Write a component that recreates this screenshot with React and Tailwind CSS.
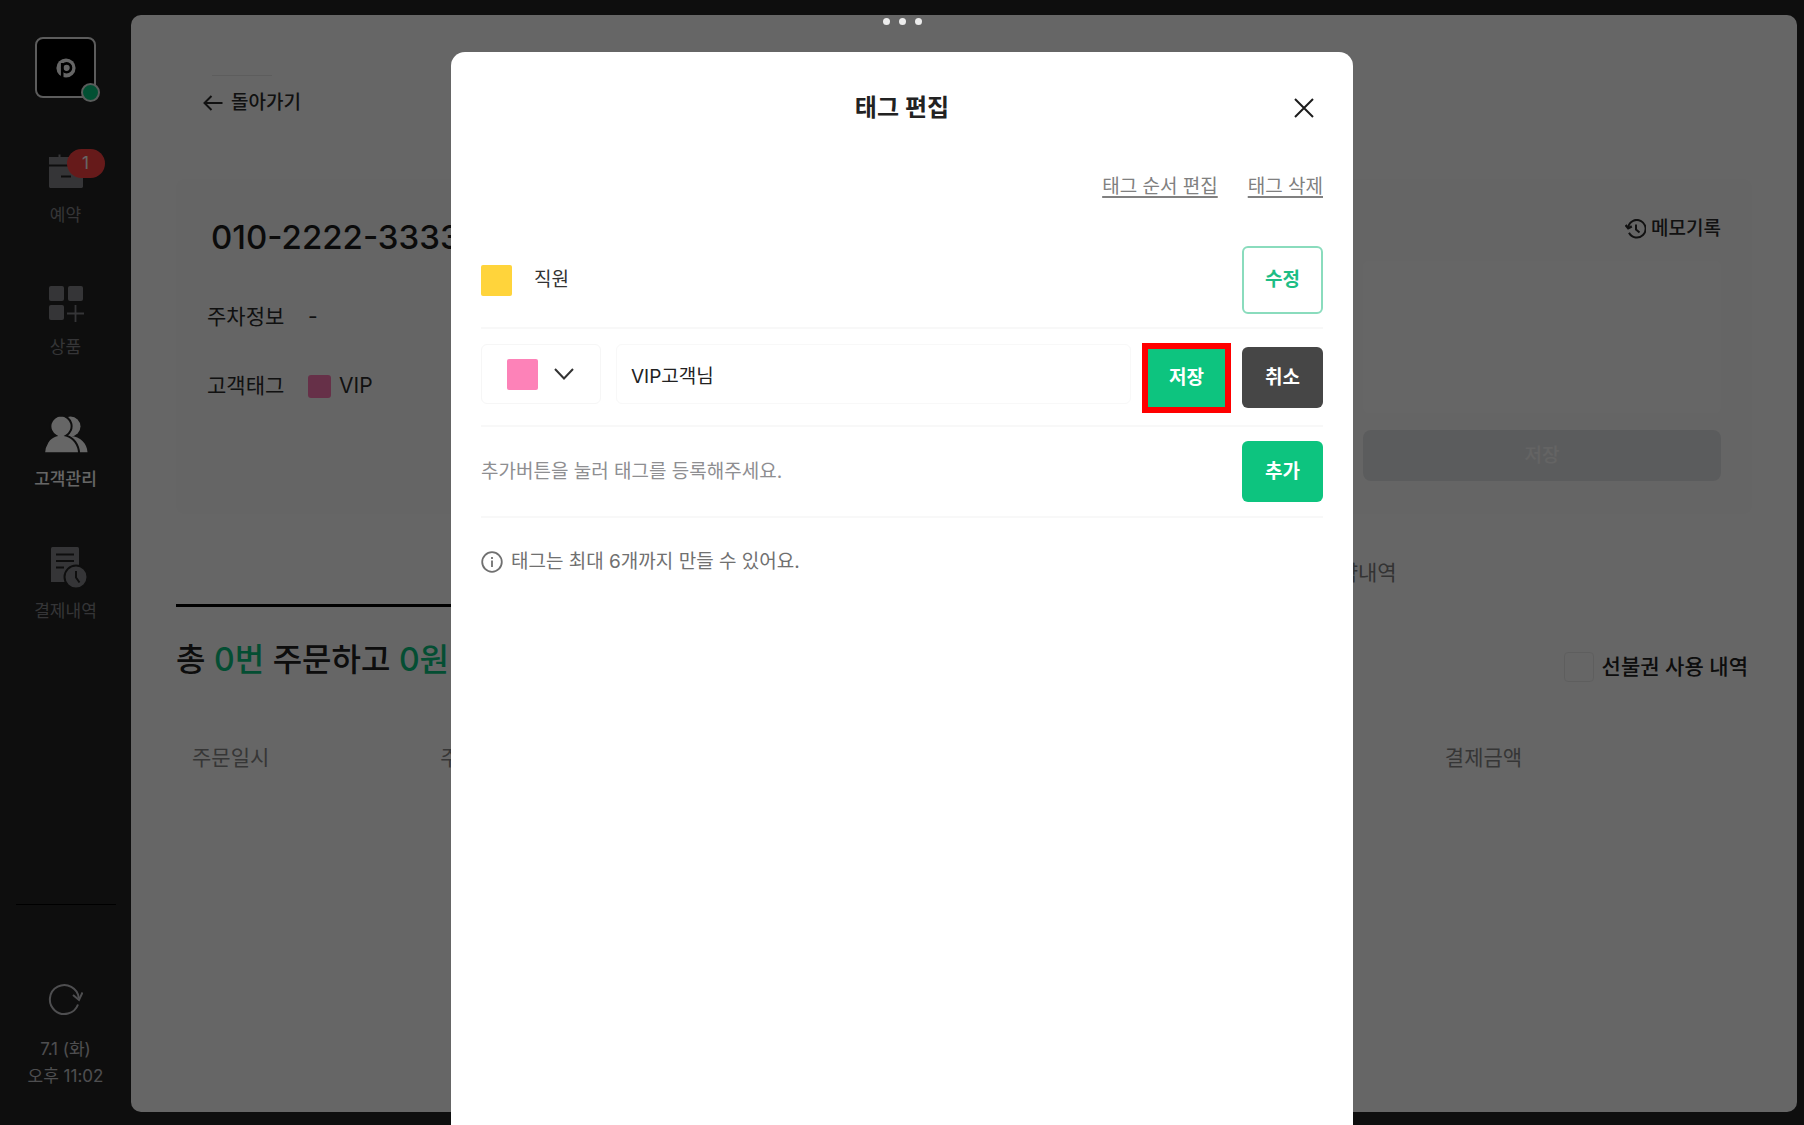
import React from "react";

const NAV = [
  { id: "reserve", label: "예약", badge: 1, icon: CalendarIcon },
  { id: "goods", label: "상품", icon: GoodsIcon },
  { id: "customers", label: "고객관리", active: true, icon: UsersIcon },
  { id: "payments", label: "결제내역", icon: ReceiptIcon },
];

function LogoMark() {
  return (
    <svg width="20" height="20" viewBox="0 0 20 20" aria-hidden="true">
      <circle cx="10" cy="10" r="9.6" fill="#fff" />
      <circle cx="10.6" cy="9.8" r="4.4" fill="none" stroke="#000" strokeWidth="2.6" />
      <path d="M6.2 5V20" stroke="#000" strokeWidth="2.6" />
    </svg>
  );
}

function CalendarIcon() {
  return (
    <svg width="44" height="44" viewBox="0 0 44 44" aria-hidden="true">
      <path d="M5 9h9.500V6.500h2V9h11V6.500h2V9H39v7.600H5z" fill="currentColor" />
      <path d="M5 18.400h34V38.600a1.400 1.400 0 0 1-1.400 1.400H6.400A1.400 1.400 0 0 1 5 38.600z" fill="currentColor" />
      <path d="M17 28.500h10" stroke="#232323" strokeWidth="2" />
    </svg>
  );
}

function GoodsIcon() {
  return (
    <svg width="44" height="44" viewBox="0 0 44 44" aria-hidden="true">
      <g fill="currentColor">
        <rect x="5" y="6" width="15" height="15" rx="2" />
        <rect x="24" y="6" width="15" height="15" rx="2" />
        <rect x="5" y="25" width="15" height="15" rx="2" />
      </g>
      <path d="M31.500 25v17M23 33.500h17" stroke="currentColor" strokeWidth="1.800" />
    </svg>
  );
}

function UsersIcon() {
  return (
    <svg width="44" height="44" viewBox="0 0 44 44" aria-hidden="true">
      <g fill="currentColor">
        <circle cx="26.500" cy="14.500" r="10" />
        <path d="M12 40.500c1-9 8-16 15-16.500 9 .5 16 7 16.500 16.500z" />
      </g>
      <path
        d="M17 3.600a10.700 10.700 0 0 1 5.200 20C29.500 25.600 34.600 32.500 35.200 41.500H0C0.500 32.500 5.200 25.600 11.800 23.600a10.700 10.700 0 0 1 5.200-20z"
        fill="currentColor"
        stroke="#232323"
        strokeWidth="2"
      />
      <path d="M0 40.500h44V44H0z" fill="#232323" />
    </svg>
  );
}

function ReceiptIcon() {
  return (
    <svg width="44" height="44" viewBox="0 0 44 44" aria-hidden="true">
      <path d="M7 4.500A1.500 1.500 0 0 1 8.500 3h25A1.500 1.500 0 0 1 35 4.500V38H7z" fill="currentColor" />
      <path d="M12 10.500h18M12 17h18M12 23.500h8" stroke="#232323" strokeWidth="1.800" />
      <circle cx="32" cy="33" r="11.500" fill="currentColor" stroke="#232323" strokeWidth="2" />
      <path d="M32 27v6.500l3.500 5" fill="none" stroke="#232323" strokeWidth="2" />
    </svg>
  );
}

function RefreshIcon() {
  return (
    <svg width="36" height="36" viewBox="0 0 36 36" fill="none" stroke="currentColor" strokeWidth="2" aria-hidden="true">
      <path d="M31 22.500A14.500 14.500 0 1 1 31.800 16" />
      <path d="M26 13l6 5 3.500-7.500" />
    </svg>
  );
}

function HistoryIcon() {
  return (
    <svg width="21" height="20" viewBox="0 0 21 20" fill="none" stroke="currentColor" strokeWidth="2" aria-hidden="true">
      <path d="M3.200 8A8.800 8.800 0 1 1 4 13.800" />
      <path d="M0.600 6l2.600 3.200 3.600-1.800" strokeWidth="2.400" />
      <path d="M11 5.500v5l3.500 3" />
    </svg>
  );
}

function Sidebar() {
  return (
    <aside className="flex w-[131px] shrink-0 flex-col items-center pt-[37px]">
      <div className="relative flex size-[61px] items-center justify-center rounded-lg border-2 border-[#e6e6e6] bg-black">
        <LogoMark />
        <span className="absolute -right-1.5 -bottom-1.5 size-[19px] rounded-full border-2 border-[#dfe6e3] bg-[#06c880]" />
      </div>
      <nav className="mt-[50px] flex flex-col gap-7">
        {NAV.map((item) => {
          const Icon = item.icon;
          return (
            <button
              key={item.id}
              type="button"
              className={
                item.active
                  ? "relative flex h-[104px] w-[78px] flex-col items-center font-medium text-white"
                  : "relative flex h-[104px] w-[78px] flex-col items-center text-[#85868a]"
              }
            >
              <Icon />
              <span className="mt-[11px] text-[17px] leading-6">{item.label}</span>
              {item.badge && (
                <span className="absolute top-px right-0 h-[29px] w-[38px] rounded-full bg-[#ff4343] text-[17px] leading-7 text-white">
                  {item.badge}
                </span>
              )}
            </button>
          );
        })}
      </nav>
      <div className="mt-auto h-px w-[100px] bg-black" />
      <div className="mt-[77px] mb-[35px] flex flex-col items-center text-[#c4c4c8]">
        <button type="button" aria-label="새로고침">
          <RefreshIcon />
        </button>
        <p className="mt-[18px] text-center text-[17px] leading-[27px]">
          7.1 (화)
          <br />
          오후 11:02
        </p>
      </div>
    </aside>
  );
}

function CustomerCard() {
  return (
    <section className="mt-[62px] flex h-[335px] justify-between rounded-lg bg-[#fdfdfd] px-[31px] text-[21px] leading-8 text-[#2c2c2c]">
      <div>
        <h1 className="mt-[38px] ml-1 text-[33px] leading-10 font-medium text-[#1c1c1c]">010-2222-3333</h1>
        <dl className="mt-[44px] grid grid-cols-[101px_auto] gap-y-[37px]">
          <dt>주차정보</dt>
          <dd>-</dd>
          <dt>고객태그</dt>
          <dd className="flex items-center gap-2">
            <span className="size-[23px] rounded-[3px] bg-[#ff78b4]" />
            VIP
          </dd>
        </dl>
      </div>
      <div className="flex w-[358px] flex-col">
        <button type="button" className="mt-[34px] flex items-center gap-[5px] self-end text-[19px] font-medium">
          <HistoryIcon />
          메모기록
        </button>
        <textarea aria-label="메모" className="mt-4 h-[152px] resize-none rounded-md bg-white" />
        <button type="button" className="mt-[17px] h-[51px] rounded-lg bg-[#e4e6e8] text-[19px] font-medium text-[#fafafa]">
          저장
        </button>
      </div>
    </section>
  );
}

function Main() {
  return (
    <main className="mt-[15px] mr-[7px] mb-[13px] flex-1 rounded-[10px] bg-white px-[45px]">
      <div className="mt-[60px] ml-9 h-px w-[60px] bg-[#e8e8e8]" />
      <button type="button" className="mt-[13px] ml-[27px] flex items-center gap-2 text-[19px] leading-7 font-medium text-[#2c2c2c]">
        <svg width="20" height="16" viewBox="0 0 20 16" fill="none" stroke="currentColor" strokeWidth="2" aria-hidden="true">
          <path d="M19.500 8H1.500M8.500 1l-7 7 7 7" />
        </svg>
        돌아가기
      </button>

      <CustomerCard />

      <div role="tablist" className="mt-[25px] grid grid-cols-2 text-[21px]">
        <button
          type="button"
          role="tab"
          aria-selected="true"
          aria-label="주문내역"
          className="h-[68px] border-b-3 border-black"
        />
        <button type="button" role="tab" aria-selected="false" className="h-[68px] text-[#808080]">
          예약내역
        </button>
      </div>

      <div className="mt-[31px] flex items-end justify-between pr-1">
        <h2 className="text-[32px] leading-[44px] font-medium text-[#222]">
          총 <span className="text-[#0ac380]">0번</span> 주문하고 <span className="text-[#0ac380]">0원</span>
        </h2>
        <label className="flex items-center gap-2 text-[21px] leading-7 font-medium text-[#222]">
          <input type="checkbox" className="size-[30px] appearance-none rounded border border-[#ececec]" />
          선불권 사용 내역
        </label>
      </div>

      <table className="mt-[46px] w-full table-fixed text-left text-[21px] leading-[60px] text-[#888]">
        <thead>
          <tr>
            <th className="w-[16%] pl-4 font-normal">주문일시</th>
            <th className="w-[32%] pl-3 font-normal">주문번호</th>
            <th className="pl-4 font-normal">주문상품</th>
            <th className="w-1/5 pl-2 font-normal">결제금액</th>
          </tr>
        </thead>
      </table>
    </main>
  );
}

function TagDialog() {
  return (
    <section
      role="dialog"
      aria-modal="true"
      aria-labelledby="tag-title"
      className="mt-[52px] flex w-1/2 flex-col rounded-t-[14px] bg-white px-[30px] text-[19px] leading-7"
    >
      <header className="grid grid-cols-[38px_1fr_38px] items-center pt-9">
        <h2 id="tag-title" className="col-start-2 text-center text-2xl leading-9 font-semibold text-[#222]">
          태그 편집
        </h2>
        <button type="button" aria-label="닫기" className="flex h-10 items-center justify-center text-[#1c1c1c]">
          <svg width="20" height="20" viewBox="0 0 20 20" fill="none" stroke="currentColor" strokeWidth="2" aria-hidden="true">
            <path d="M1 1l18 18M19 1L1 19" />
          </svg>
        </button>
      </header>

      <div className="mt-[45px] flex justify-end gap-[30px] text-[#808080]">
        <button type="button" className="underline decoration-2 underline-offset-3">태그 순서 편집</button>
        <button type="button" className="underline decoration-2 underline-offset-3">태그 삭제</button>
      </div>

      <div className="mt-[45px] flex items-center border-b-2 border-[#f8f8f8] pb-[13px]">
        <span className="size-[31px] rounded-[2px] bg-[#ffd43b]" />
        <span className="ml-[22px] flex-1 text-[#333]">직원</span>
        <button type="button" className="h-[68px] w-[81px] rounded-md border-2 border-[#8adcbd] font-semibold text-[#1dbd85]">
          수정
        </button>
      </div>

      <div className="flex items-start border-b-2 border-[#f8f8f8] pt-3.5 pb-3">
        <button
          type="button"
          aria-label="태그 색상"
          className="mt-px flex h-[60px] w-[120px] shrink-0 items-center gap-4 rounded-md border border-[#f6f6f6] pl-[25px]"
        >
          <span className="size-[31px] rounded-[2px] bg-[#fd82b8]" />
          <svg width="20" height="14" viewBox="0 0 20 14" fill="none" stroke="#333" strokeWidth="2" aria-hidden="true">
            <path d="M1 2l9 9.500 9-9.500" />
          </svg>
        </button>
        <input
          type="text"
          aria-label="태그 이름"
          defaultValue="VIP고객님"
          className="mt-px ml-[15px] h-[60px] min-w-0 flex-1 rounded-md border border-[#f8f8f8] px-[14px] text-[#222]"
        />
        <button
          type="button"
          className="ml-[11px] h-[70px] w-[89px] border-6 border-[#ff0000] bg-[#0dc47f] font-semibold text-white"
        >
          저장
        </button>
        <button type="button" className="mt-1 ml-[11px] h-[61px] w-[81px] rounded-md bg-[#464646] font-semibold text-white">
          취소
        </button>
      </div>

      <div className="flex items-center justify-between border-b-2 border-[#f8f8f8] py-3.5">
        <p className="text-[#8e8e91]">추가버튼을 눌러 태그를 등록해주세요.</p>
        <button type="button" className="h-[61px] w-[81px] rounded-md bg-[#0dc47f] font-semibold text-white">
          추가
        </button>
      </div>

      <p className="mt-[30px] flex items-center gap-2 text-[#707070]">
        <svg width="22" height="22" viewBox="0 0 22 22" fill="none" stroke="currentColor" strokeWidth="1.800" aria-hidden="true">
          <circle cx="11" cy="11" r="9.800" />
          <path d="M11 9.500v6.500M11 6v2" />
        </svg>
        태그는 최대 6개까지 만들 수 있어요.
      </p>
    </section>
  );
}

export default function App() {
  return (
    <div className="relative flex min-h-screen bg-[#232323] font-['Inter','Noto_Sans_CJK_KR',sans-serif]">
      <Sidebar />
      <Main />
      <div className="absolute inset-0 flex justify-center bg-black/60">
        <div className="absolute top-[18px] flex gap-[9px]">
          <span className="size-[7px] rounded-full bg-[#ececec]" />
          <span className="size-[7px] rounded-full bg-[#ececec]" />
          <span className="size-[7px] rounded-full bg-[#ececec]" />
        </div>
        <TagDialog />
      </div>
    </div>
  );
}
